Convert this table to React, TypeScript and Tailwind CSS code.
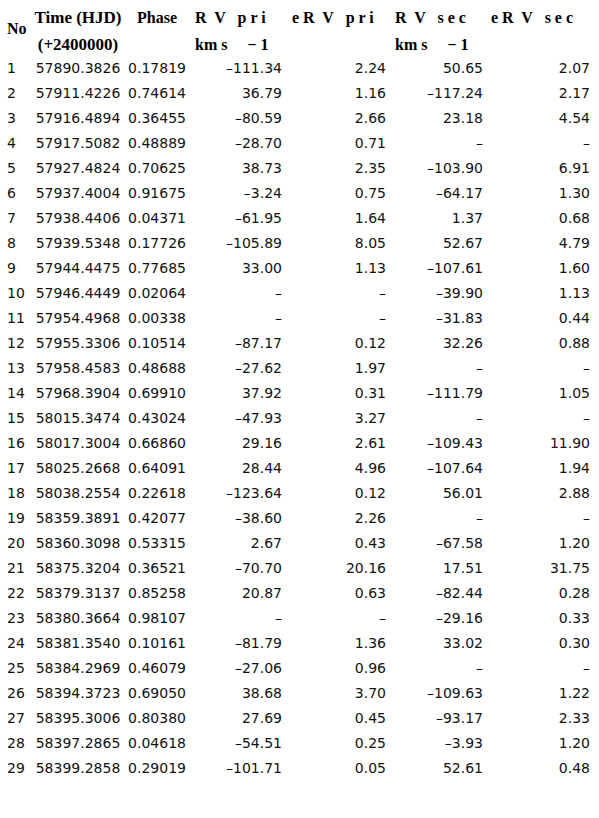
import React from "react";

const rows: string[][] = [
  ["1", "57890.3826", "0.17819", "–111.34", "2.24", "50.65", "2.07"],
  ["2", "57911.4226", "0.74614", "36.79", "1.16", "–117.24", "2.17"],
  ["3", "57916.4894", "0.36455", "–80.59", "2.66", "23.18", "4.54"],
  ["4", "57917.5082", "0.48889", "–28.70", "0.71", "–", "–"],
  ["5", "57927.4824", "0.70625", "38.73", "2.35", "–103.90", "6.91"],
  ["6", "57937.4004", "0.91675", "–3.24", "0.75", "–64.17", "1.30"],
  ["7", "57938.4406", "0.04371", "–61.95", "1.64", "1.37", "0.68"],
  ["8", "57939.5348", "0.17726", "–105.89", "8.05", "52.67", "4.79"],
  ["9", "57944.4475", "0.77685", "33.00", "1.13", "–107.61", "1.60"],
  ["10", "57946.4449", "0.02064", "–", "–", "–39.90", "1.13"],
  ["11", "57954.4968", "0.00338", "–", "–", "–31.83", "0.44"],
  ["12", "57955.3306", "0.10514", "–87.17", "0.12", "32.26", "0.88"],
  ["13", "57958.4583", "0.48688", "–27.62", "1.97", "–", "–"],
  ["14", "57968.3904", "0.69910", "37.92", "0.31", "–111.79", "1.05"],
  ["15", "58015.3474", "0.43024", "–47.93", "3.27", "–", "–"],
  ["16", "58017.3004", "0.66860", "29.16", "2.61", "–109.43", "11.90"],
  ["17", "58025.2668", "0.64091", "28.44", "4.96", "–107.64", "1.94"],
  ["18", "58038.2554", "0.22618", "–123.64", "0.12", "56.01", "2.88"],
  ["19", "58359.3891", "0.42077", "–38.60", "2.26", "–", "–"],
  ["20", "58360.3098", "0.53315", "2.67", "0.43", "–67.58", "1.20"],
  ["21", "58375.3204", "0.36521", "–70.70", "20.16", "17.51", "31.75"],
  ["22", "58379.3137", "0.85258", "20.87", "0.63", "–82.44", "0.28"],
  ["23", "58380.3664", "0.98107", "–", "–", "–29.16", "0.33"],
  ["24", "58381.3540", "0.10161", "–81.79", "1.36", "33.02", "0.30"],
  ["25", "58384.2969", "0.46079", "–27.06", "0.96", "–", "–"],
  ["26", "58394.3723", "0.69050", "38.68", "3.70", "–109.63", "1.22"],
  ["27", "58395.3006", "0.80380", "27.69", "0.45", "–93.17", "2.33"],
  ["28", "58397.2865", "0.04618", "–54.51", "0.25", "–3.93", "1.20"],
  ["29", "58399.2858", "0.29019", "–101.71", "0.05", "52.61", "0.48"],
];

const serif = "font-['Liberation_Serif',serif] font-bold text-[17px] leading-[18px] text-black";
const sans = "font-['DejaVu_Sans',sans-serif] text-[14px] text-[#111]";

export default function App() {
  return (
    <div className="w-[599px] h-[818px] bg-white">
      <table className="table-fixed border-collapse w-[595px]">
        <colgroup>
          <col className="w-[32px]" />
          <col className="w-[92px]" />
          <col className="w-[66px]" />
          <col className="w-[97px]" />
          <col className="w-[104px]" />
          <col className="w-[97px]" />
          <col className="w-[107px]" />
        </colgroup>
        <thead className={serif}>
          <tr className="h-[33px]">
            <th rowSpan={2} className="text-left pl-[7px] pt-[2px] align-middle font-bold text-[16px]">No</th>
            <th className="text-center pt-[3px] align-middle font-bold whitespace-nowrap">Time (HJD)</th>
            <th className="text-center pt-[3px] align-middle font-bold text-[16px]">Phase</th>
            <th className="text-left pl-[5px] pt-[3px] align-middle font-bold whitespace-pre text-[16px]">R  V   p r i</th>
            <th className="text-left pl-[5px] pt-[3px] align-middle font-bold whitespace-pre text-[16px]">e R  V   p r i</th>
            <th className="text-left pl-[4px] pt-[3px] align-middle font-bold whitespace-pre text-[16px]">R  V   s e c</th>
            <th className="text-left pl-[3px] pt-[3px] align-middle font-bold whitespace-pre text-[16px]">e R  V   s e c</th>
          </tr>
          <tr className="h-[23px]">
            <th className="text-center pt-[1px] align-middle font-bold">(+2400000)</th>
            <th></th>
            <th className="text-left pl-[5px] pt-[1px] align-middle font-bold whitespace-pre text-[16px]">km s     − 1</th>
            <th></th>
            <th className="text-left pl-[4px] pt-[1px] align-middle font-bold whitespace-pre text-[16px]">km s     − 1</th>
            <th></th>
          </tr>
        </thead>
        <tbody className={sans}>
          {rows.map((r) => (
            <tr key={r[0]} className="h-[25px]">
              <td className="text-left pl-[7px] align-middle">{r[0]}</td>
              <td className="text-center align-middle">{r[1]}</td>
              <td className="text-center align-middle">{r[2]}</td>
              <td className="text-right pr-[5px] align-middle">{r[3]}</td>
              <td className="text-right pr-[5px] align-middle">{r[4]}</td>
              <td className="text-right pr-[5px] align-middle">{r[5]}</td>
              <td className="text-right pr-[5px] align-middle">{r[6]}</td>
            </tr>
          ))}
        </tbody>
      </table>
    </div>
  );
}
